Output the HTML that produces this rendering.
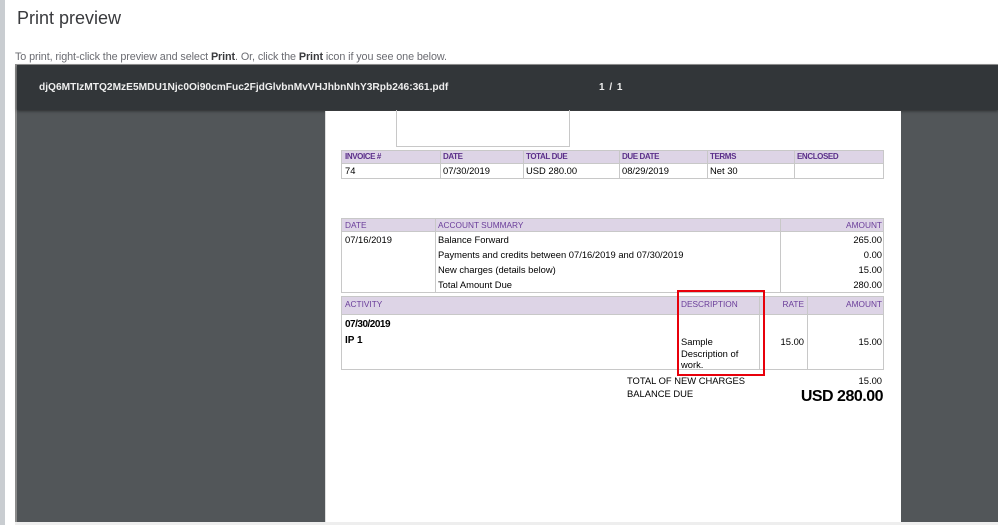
<!DOCTYPE html>
<html><head><meta charset="utf-8"><style>
*{margin:0;padding:0;box-sizing:border-box}
body{width:998px;height:525px;overflow:hidden;background:#fff;font-family:"Liberation Sans",sans-serif;position:relative}
.a{position:absolute}
.t{font-size:9.4px;color:#000;white-space:nowrap}
.h{font-size:8.3px;color:#6a3d9a;white-space:nowrap}
.hb{font-size:8px;color:#5b2f8a;font-weight:bold;letter-spacing:-0.4px;white-space:nowrap}
.b{background:#ddd4e6}
.vl{position:absolute;width:1px;background:#c8c8c8}
.hl{position:absolute;height:1px;background:#c8c8c8}
</style></head><body>
<div class="a" style="left:0;top:0;width:5px;height:525px;background:#c9cdd1"></div>
<div class="a" style="left:17px;top:8px;font-size:18px;color:#393a3d">Print preview</div>
<div class="a" style="left:15px;top:51px;font-size:10.8px;color:#6b6c72;letter-spacing:-0.1px">To print, right-click the preview and select <b style="color:#393a3d;font-weight:600">Print</b>. Or, click the <b style="color:#393a3d;font-weight:600">Print</b> icon if you see one below.</div>
<div class="a" style="left:15px;top:64px;width:983px;height:458px;background:#525659;border-left:2px solid #8a8a8a;border-top:1px solid #999"></div>
<div class="a" style="left:17px;top:65px;width:981px;height:45px;background:#323639;box-shadow:0 1px 3px rgba(0,0,0,.5)"></div>
<div class="a" style="left:39px;top:82px;font-size:10.2px;font-weight:bold;color:#eee">djQ6MTIzMTQ2MzE5MDU1Njc0Oi90cmFuc2FjdGlvbnMvVHJhbnNhY3Rpb246:361.pdf</div>
<div class="a" style="left:599px;top:82px;font-size:10px;font-weight:bold;color:#eee;letter-spacing:1px">1 / 1</div>
<div class="a" style="left:15px;top:522px;width:983px;height:3px;background:#eee"></div>
<div class="a" style="left:325px;top:111px;width:576px;height:411px;background:#fff;border-left:1px solid #ddd"></div>
<div class="a" style="left:396px;top:110px;width:174px;height:37px;border:1px solid #c8c8c8;border-top:none"></div>
<div class="a b" style="left:341px;top:150px;width:543px;height:14px"></div>
<div class="a" style="left:341px;top:150px;width:543px;height:29px;border:1px solid #c8c8c8"></div>
<div class="hl" style="left:341px;top:163px;width:543px"></div>
<div class="vl" style="left:440px;top:150px;height:29px"></div>
<div class="vl" style="left:523px;top:150px;height:29px"></div>
<div class="vl" style="left:619px;top:150px;height:29px"></div>
<div class="vl" style="left:707px;top:150px;height:29px"></div>
<div class="vl" style="left:794px;top:150px;height:29px"></div>
<div class="a hb" style="left:345px;top:152px">INVOICE #</div>
<div class="a hb" style="left:443px;top:152px">DATE</div>
<div class="a hb" style="left:526px;top:152px">TOTAL DUE</div>
<div class="a hb" style="left:622px;top:152px">DUE DATE</div>
<div class="a hb" style="left:710px;top:152px">TERMS</div>
<div class="a hb" style="left:797px;top:152px">ENCLOSED</div>
<div class="a t" style="left:345px;top:165px">74</div>
<div class="a t" style="left:443px;top:165px">07/30/2019</div>
<div class="a t" style="left:526px;top:165px">USD 280.00</div>
<div class="a t" style="left:622px;top:165px">08/29/2019</div>
<div class="a t" style="left:710px;top:165px">Net 30</div>
<div class="a b" style="left:341px;top:218px;width:543px;height:14px"></div>
<div class="a" style="left:341px;top:218px;width:543px;height:75px;border:1px solid #c8c8c8"></div>
<div class="hl" style="left:341px;top:231px;width:543px"></div>
<div class="vl" style="left:435px;top:218px;height:75px"></div>
<div class="vl" style="left:780px;top:218px;height:75px"></div>
<div class="a h" style="left:345px;top:220px">DATE</div>
<div class="a h" style="left:438px;top:220px">ACCOUNT SUMMARY</div>
<div class="a h" style="right:116px;top:220px">AMOUNT</div>
<div class="a t" style="left:345px;top:234px">07/16/2019</div>
<div class="a t" style="left:438px;top:234px">Balance Forward</div>
<div class="a t" style="left:438px;top:249px">Payments and credits between 07/16/2019 and 07/30/2019</div>
<div class="a t" style="left:438px;top:264px">New charges (details below)</div>
<div class="a t" style="left:438px;top:279px">Total Amount Due</div>
<div class="a t" style="right:116px;top:234px">265.00</div>
<div class="a t" style="right:116px;top:249px">0.00</div>
<div class="a t" style="right:116px;top:264px">15.00</div>
<div class="a t" style="right:116px;top:279px">280.00</div>
<div class="a b" style="left:341px;top:297px;width:543px;height:17px"></div>
<div class="a" style="left:341px;top:296px;width:543px;height:74px;border:1px solid #c8c8c8"></div>
<div class="hl" style="left:341px;top:314px;width:543px"></div>
<div class="vl" style="left:759px;top:296px;height:74px"></div>
<div class="vl" style="left:807px;top:296px;height:74px"></div>
<div class="a h" style="left:345px;top:299px">ACTIVITY</div>
<div class="a h" style="left:681px;top:299px">DESCRIPTION</div>
<div class="a h" style="right:194px;top:299px">RATE</div>
<div class="a h" style="right:116px;top:299px">AMOUNT</div>
<div class="a t" style="left:345px;top:319px;font-weight:bold;font-size:10px;letter-spacing:-0.5px">07/30/2019</div>
<div class="a t" style="left:345px;top:335px;font-weight:bold;font-size:10px">IP 1</div>
<div class="a t" style="left:681px;top:336px;line-height:11.5px;white-space:normal;width:70px">Sample<br>Description of<br>work.</div>
<div class="a t" style="right:194px;top:336px">15.00</div>
<div class="a t" style="right:116px;top:336px">15.00</div>
<div class="a" style="left:677px;top:290px;width:88px;height:86px;border:2px solid #e8000b"></div>
<div class="a t" style="left:627px;top:375px">TOTAL OF NEW CHARGES</div>
<div class="a t" style="right:116px;top:375px">15.00</div>
<div class="a t" style="left:627px;top:388px">BALANCE DUE</div>
<div class="a" style="right:115px;top:388px;font-size:16px;font-weight:bold;letter-spacing:-0.5px">USD 280.00</div>
</body></html>
